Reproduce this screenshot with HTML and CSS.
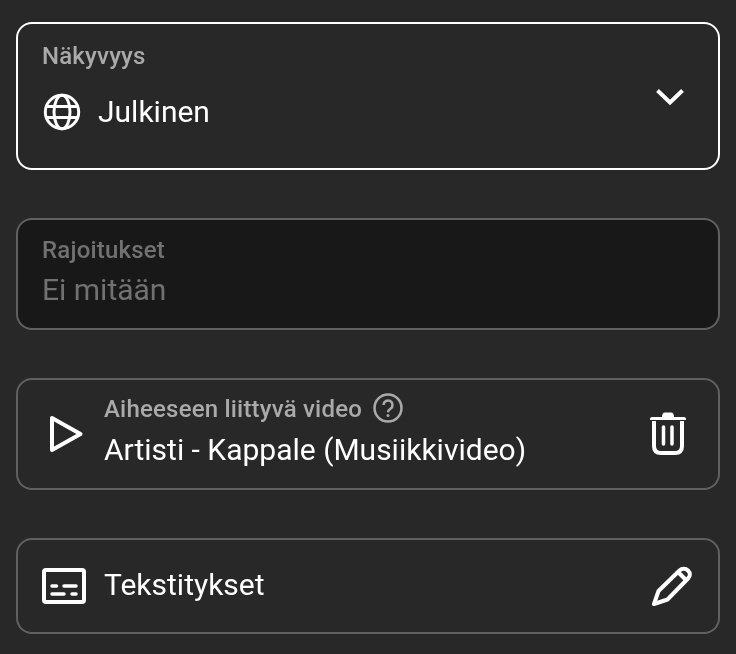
FILE: index.html
```html
<!DOCTYPE html>
<html lang="fi">
<head>
<meta charset="utf-8">
<title>Näkyvyys</title>
<link rel="stylesheet" href="styles.css">
</head>
<body>
<main class="stack">
  <section class="card card-focus">
    <div class="grow">
      <div class="label">Näkyvyys</div>
      <div class="value-row">
        <svg class="icon-globe" viewBox="0 0 40 40" fill="none" stroke="#fff" stroke-width="3">
          <circle cx="20" cy="20" r="16.700"/>
          <ellipse cx="20" cy="20" rx="8" ry="16.700"/>
          <path d="M3.500 14.500H36.500M3.500 25.500H36.500"/>
        </svg>
        <span class="value">Julkinen</span>
      </div>
    </div>
    <svg class="icon-chevron" viewBox="0 0 28 18" fill="none" stroke="#fff" stroke-width="4">
      <path d="M1.500 2.500L14 14.500L26.500 2.500"/>
    </svg>
  </section>

  <section class="card card-disabled">
    <div class="label label-disabled">Rajoitukset</div>
    <div class="value value-disabled">Ei mitään</div>
  </section>

  <section class="card card-row card-video">
    <svg class="icon-play" viewBox="0 0 36 38" fill="none" stroke="#fff" stroke-width="4" stroke-linejoin="round">
      <path d="M2 3L30.500 19L2 35Z"/>
    </svg>
    <div class="grow video-text">
      <div class="label-row">
        <span class="label label-inline">Aiheeseen liittyvä video</span>
        <svg class="icon-help" viewBox="0 0 30 30" fill="none" stroke="#aaa" stroke-width="2.500">
          <circle cx="15" cy="15" r="13.500"/>
          <path d="M10.500 12a4.500 4.500 0 1 1 7 3.700c-1.500 1-2.500 1.800-2.500 3.500"/>
          <circle cx="15" cy="22.500" r="1.500" fill="#aaa" stroke="none"/>
        </svg>
      </div>
      <div class="value">Artisti - Kappale (Musiikkivideo)</div>
    </div>
    <svg class="icon-trash" viewBox="0 0 36 44" fill="none" stroke="#fff">
      <path d="M0 7C0 5.500 1 5 3 5H12C12 2 13 0.500 15 0.500H21C23 0.500 24 2 24 5H33C35 5 36 5.500 36 7V8H0Z" fill="#fff" stroke="none"/>
      <path d="M4 9V34C4 38.500 6.500 41 11 41H25C29.500 41 32 38.500 32 34V9" stroke-width="4"/>
      <path d="M13.500 15V32M22 15V32" stroke-width="3.500" stroke-linecap="round"/>
    </svg>
  </section>

  <section class="card card-row card-captions">
    <svg class="icon-captions" viewBox="0 0 44 36" fill="none">
      <rect x="2" y="2" width="40" height="32" rx="2" stroke="#fff" stroke-width="4"/>
      <path d="M10 18H14.500M22 18H34M10 26H22M30 26H34" stroke="#fff" stroke-width="3.500" stroke-linecap="round"/>
    </svg>
    <div class="grow captions-text"><div class="value">Tekstitykset</div></div>
    <svg class="icon-pencil" viewBox="0 0 40 40" fill="none" stroke="#fff" stroke-width="4" stroke-linejoin="round">
      <path d="M2 38L6.500 25L27.500 4.500C30 2 33.500 2 36 4.500C38.500 7 38.500 10 36 12.500L15.500 33.500Z"/>
      <path d="M26 6L34.500 14.500"/>
    </svg>
  </section>
</main>
</body>
</html>
```

FILE: styles.css
```css
* { box-sizing: border-box; }

html, body { margin: 0; height: 100%; }

body {
  background: #282828;
  color: #fff;
  font-family: Roboto, "Liberation Sans", sans-serif;
  overflow: hidden;
}

.stack {
  display: flex;
  flex-direction: column;
  gap: 48px;
  padding: 22px 16px 0;
  will-change: opacity;
}

.card {
  border: 2px solid #606060;
  border-radius: 16px;
}

.card-focus {
  display: flex;
  align-items: flex-start;
  height: 148px;
  padding: 18px 34px 0 24px;
  border-color: #fff;
}

.card-disabled {
  height: 112px;
  padding: 16px 24px 0;
  background: rgba(0, 0, 0, 0.4);
}

.card-row {
  display: flex;
  align-items: center;
}

.card-video { height: 112px; padding: 0 32px 0 32px; }
.card-captions { height: 96px; padding: 0 26px 0 24px; }

.grow { flex: 1; min-width: 0; }

.video-text { margin-bottom: 7px; }
.captions-text { margin-bottom: 2px; }

.label {
  font-size: 24px;
  font-weight: 500;
  line-height: 28px;
  letter-spacing: 0.200px;
  color: #aaa;
}

.label-inline { margin-top: 2px; }
.label-disabled { color: #717171; }

.value {
  font-size: 30px;
  line-height: 36px;
  color: #fff;
}

.value-disabled { margin-top: 8px; color: #717171; }

.value-row {
  display: flex;
  align-items: center;
  gap: 16px;
  margin-top: 22px;
}

.label-row {
  display: flex;
  align-items: center;
  gap: 11px;
  margin-bottom: 9px;
}

.icon-globe { width: 40px; height: 40px; flex: none; }
.icon-chevron { width: 28px; height: 18px; flex: none; margin-top: 46px; }
.icon-play { width: 36px; height: 38px; flex: none; margin-right: 18px; }
.icon-help { width: 30px; height: 30px; flex: none; }
.icon-trash { width: 36px; height: 44px; flex: none; }
.icon-captions { width: 44px; height: 36px; flex: none; margin-right: 18px; }
.icon-pencil { width: 40px; height: 40px; flex: none; }
```
